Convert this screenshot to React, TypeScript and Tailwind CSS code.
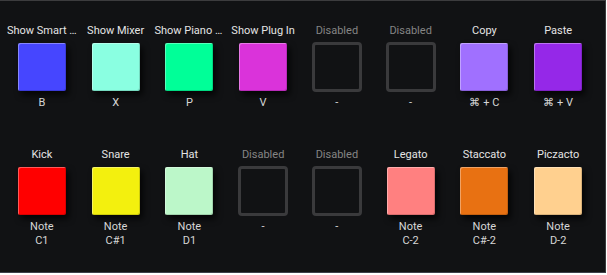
import React from "react"

type Pad = {
  label: string
  color?: string
  keys: string[]
}

const topRow: Pad[] = [
  { label: "Show Smart Controls", color: "bg-[#4646ff]", keys: ["B"] },
  { label: "Show Mixer", color: "bg-[#8affe1]", keys: ["X"] },
  { label: "Show Piano Roll", color: "bg-[#00ff98]", keys: ["P"] },
  { label: "Show Plug In", color: "bg-[#da33da]", keys: ["V"] },
  { label: "Disabled", keys: ["-"] },
  { label: "Disabled", keys: ["-"] },
  { label: "Copy", color: "bg-[#a070ff]", keys: ["⌘ + C"] },
  { label: "Paste", color: "bg-[#9528e8]", keys: ["⌘ + V"] },
]

const bottomRow: Pad[] = [
  { label: "Kick", color: "bg-[#ff0000]", keys: ["Note", "C1"] },
  { label: "Snare", color: "bg-[#f3f00e]", keys: ["Note", "C#1"] },
  { label: "Hat", color: "bg-[#bcf7c9]", keys: ["Note", "D1"] },
  { label: "Disabled", keys: ["-"] },
  { label: "Disabled", keys: ["-"] },
  { label: "Legato", color: "bg-[#ff8080]", keys: ["Note", "C-2"] },
  { label: "Staccato", color: "bg-[#e87112]", keys: ["Note", "C#-2"] },
  { label: "Piczacto", color: "bg-[#ffd08f]", keys: ["Note", "D-2"] },
]

function PadCell({ pad }: { pad: Pad }) {
  const disabled = !pad.color
  return (
    <div className="flex flex-col items-center">
      <div
        className={`w-full max-w-[70px] truncate text-center text-[11px] leading-[14px] ${
          disabled ? "text-[#858585]" : "text-[#e4e4e4]"
        }`}
      >
        {pad.label}
      </div>
      {disabled ? (
        <div className="mt-[4px] -mb-px w-[50px] h-[50px] rounded-[4px] border-[3px] border-[#3a3a3c]" />
      ) : (
        <div
          className={`mt-[5px] w-[48px] h-[48px] rounded-[2px] ${pad.color} shadow-[inset_1px_1px_0_rgba(255,255,255,0.35),inset_-1px_-1px_0_rgba(0,0,0,0.15),3px_4px_6px_rgba(0,0,0,0.75)]`}
        />
      )}
      <div className="mt-[5px] flex flex-col items-center text-[11px] leading-[14px] text-[#d6d6d6]">
        {pad.keys.map((k, i) => (
          <span key={i}>{k}</span>
        ))}
      </div>
    </div>
  )
}

export default function App() {
  return (
    <div
      className="w-[606px] h-[273px] bg-[#111214] border-t border-r border-b border-t-[#3c3c3e] border-r-[#3a3a3c] border-b-[#3b404a] pl-[5px] pt-[23px]"
      style={{ fontFamily: "Roboto, 'Noto Sans', sans-serif" }}
    >
      <div className="grid w-[590px] grid-cols-8">
        {topRow.map((p, i) => (
          <PadCell key={i} pad={p} />
        ))}
      </div>
      <div className="mt-[38px] grid w-[590px] grid-cols-8">
        {bottomRow.map((p, i) => (
          <PadCell key={i} pad={p} />
        ))}
      </div>
    </div>
  )
}
